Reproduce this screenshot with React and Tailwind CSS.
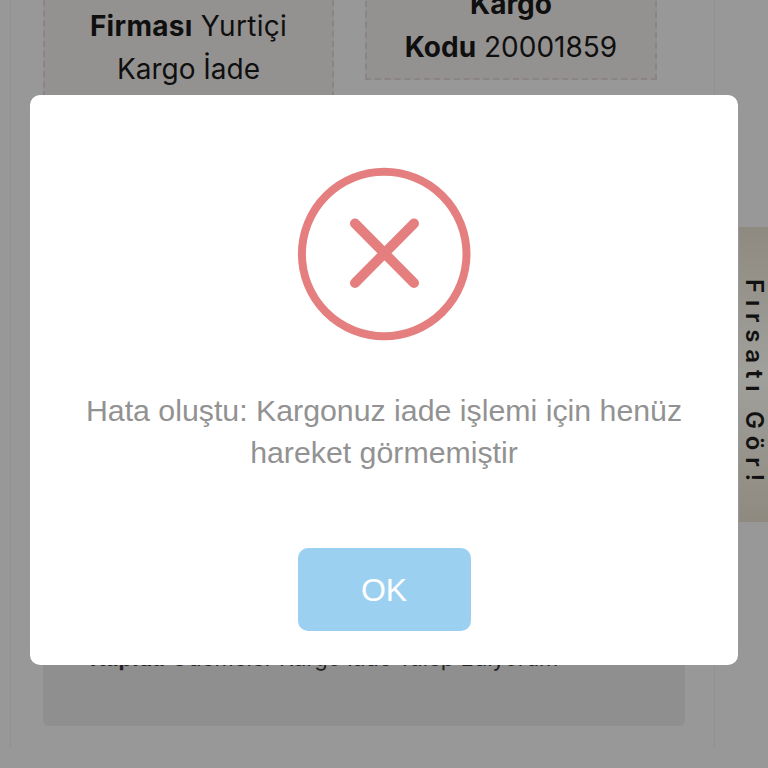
import React from "react";

const ErrorIcon = () => (
  <svg width="174" height="174" viewBox="0 0 174 174" fill="none" stroke="#e57f7f" strokeLinecap="round">
    <circle cx="87.2" cy="87" r="82.3" strokeWidth="8" />
    <path d="M58 56.5L117 116M117 56.5L58 116" strokeWidth="10" />
  </svg>
);

const App = () => {
  return (
    <div className="relative h-[768px] w-[768px] overflow-hidden bg-[#989898] font-['Inter',sans-serif]">
      {/* page behind the dialog */}
      <div className="ml-[10px] h-full w-[705px] border-x border-[#919191] pl-[32px]">
        <div className="-mt-[20px] flex gap-[31px]">
          <div className="h-[300px] w-[291px] border-2 border-dashed border-[#8a8484] bg-[#949291] pt-[23px] text-center text-[28px] leading-[43px] text-[#0f0f0f]">
            <p className="tracking-[0.3px]"><b>Firması</b> Yurtiçi</p>
            <p>Kargo İade</p>
          </div>
          <div className="h-[100px] w-[292px] border-2 border-dashed border-[#8a8484] bg-[#949291] pt-[1px] text-center text-[28px] leading-[43px] text-[#0f0f0f]">
            <p className="font-bold">Kargo</p>
            <p><b>Kodu</b> 20001859</p>
          </div>
        </div>
        <div className="mt-[20px] h-[426px] w-[642px] rounded-b-md bg-[#8f8f8f] pl-[47px] pt-[343px] text-[22px] leading-[30px] text-[#222]">
          <b>Kapıda</b> Ödemeler Kargo İade Talep Ediyorum
        </div>
      </div>

      {/* side tab */}
      <div className="absolute right-0 top-[227px] flex h-[295px] w-[29px] items-center justify-center bg-gradient-to-b from-[#8f8a80] via-[#a0a09c] to-[#8f8a80] pt-[19px]">
        <span className="text-[24px] font-semibold leading-none tracking-[6.8px] text-[#111] [writing-mode:vertical-rl]">Fırsatı Gör!</span>
      </div>

      {/* error dialog */}
      <div className="absolute left-[30px] top-[95px] flex h-[570px] w-[708px] flex-col items-center rounded-[10px] bg-white pt-[72px] font-['Liberation_Sans',sans-serif]">
        <ErrorIcon />
        <p className="mt-[49px] w-[640px] text-center text-[30.3px] font-normal leading-[42px] text-[#929292]">
          Hata oluştu: Kargonuz iade işlemi için henüz hareket görmemiştir
        </p>
        <button className="mt-[74px] h-[83px] w-[173px] rounded-[10px] bg-[#9cd0f1] text-[32px] text-white">OK</button>
      </div>
    </div>
  );
};

export default App;
